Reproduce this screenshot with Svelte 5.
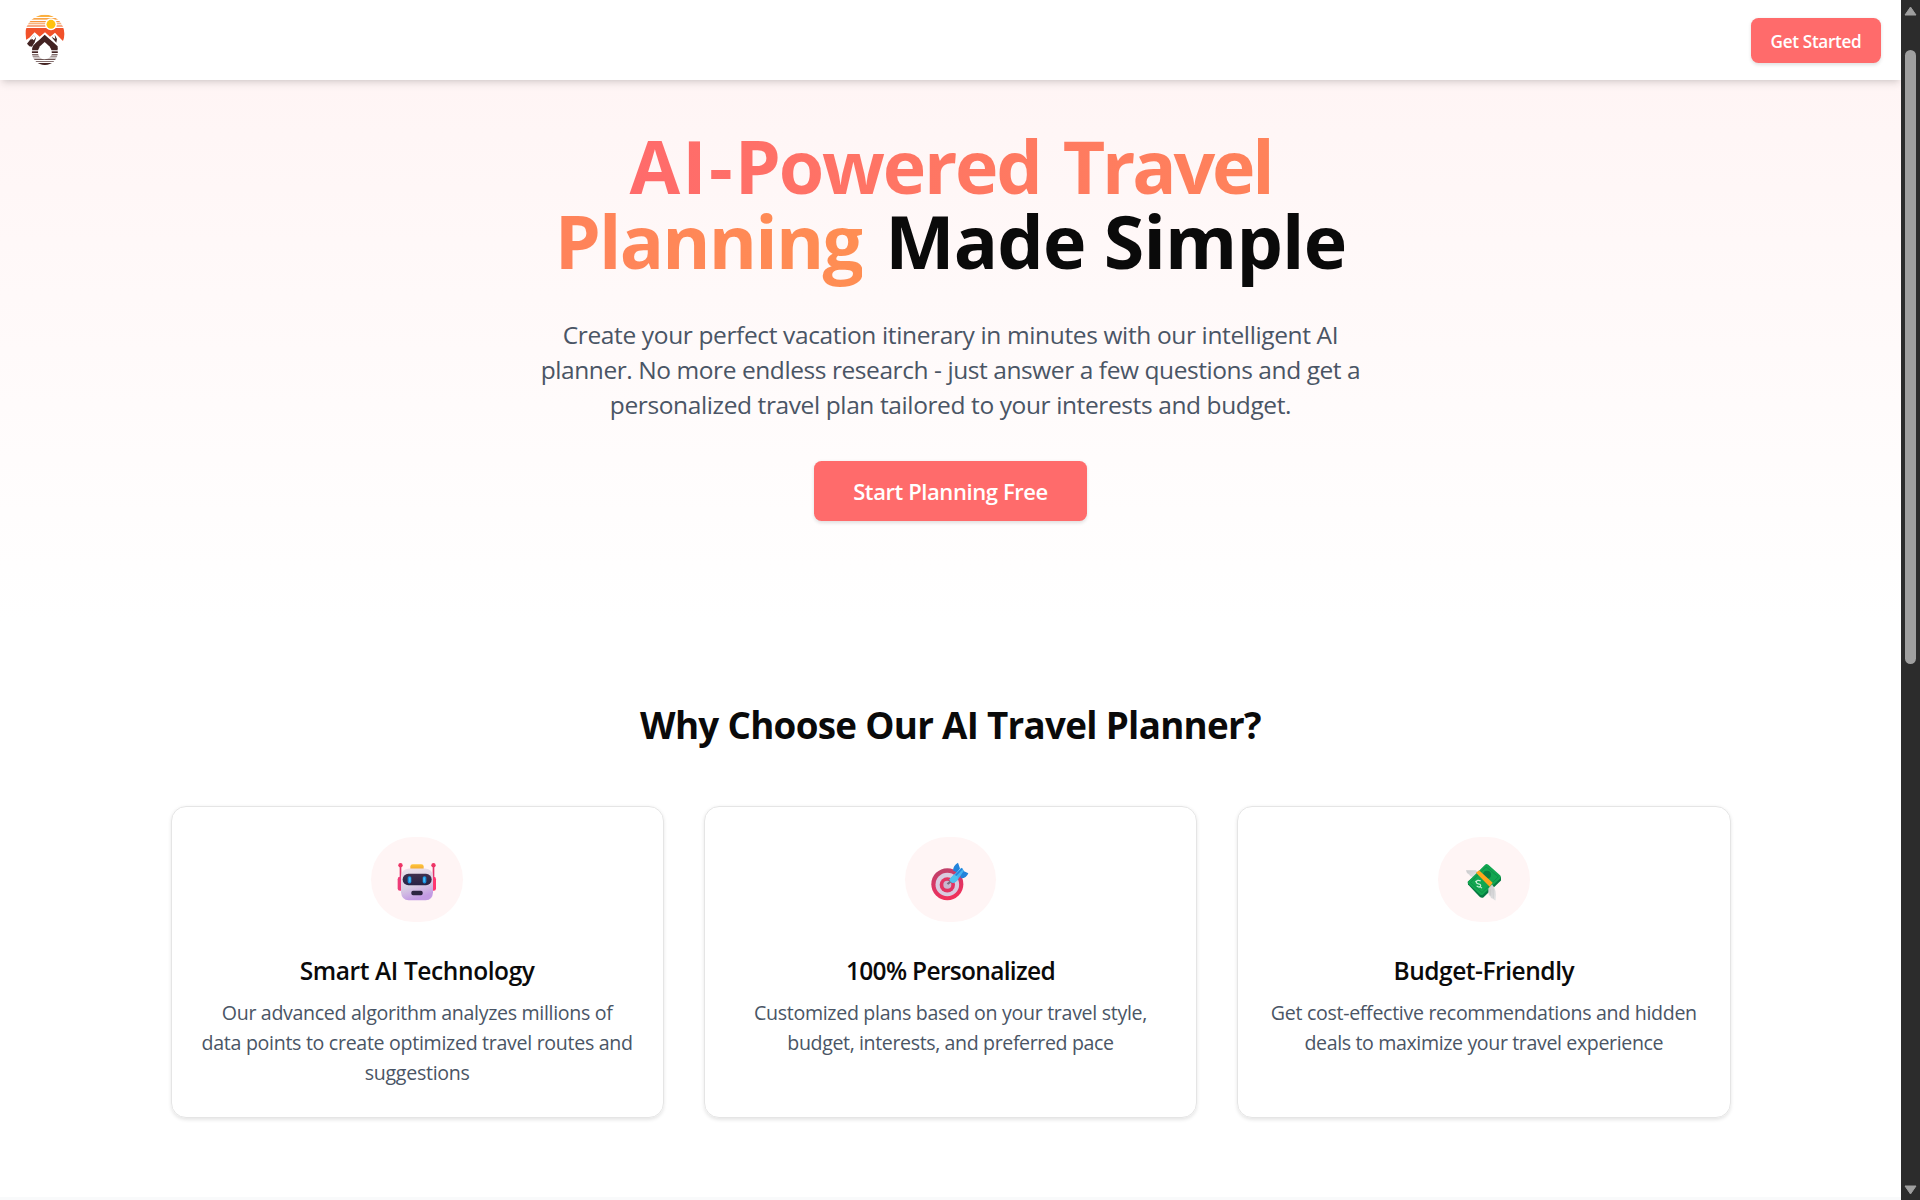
<script>
  const intro = [
    { text: 'Create your perfect vacation itinerary in minutes with our intelligent AI', tracking: -0.368 },
    { text: 'planner. No more endless research - just answer a few questions and get a', tracking: -0.428 },
    { text: 'personalized travel plan tailored to your interests and budget.', tracking: -0.39 }
  ];

  const features = [
    {
      icon: 'robot',
      badge: 92,
      title: 'Smart AI Technology',
      tracking: -0.4,
      lines: [
        { text: 'Our advanced algorithm analyzes millions of', tracking: -0.32 },
        { text: 'data points to create optimized travel routes and', tracking: -0.305 },
        { text: 'suggestions', tracking: -0.271 }
      ]
    },
    {
      icon: 'target',
      badge: 91,
      title: '100% Personalized',
      tracking: -0.68,
      lines: [
        { text: 'Customized plans based on your travel style,', tracking: -0.315 },
        { text: 'budget, interests, and preferred pace', tracking: -0.385 }
      ]
    },
    {
      icon: 'money',
      badge: 92,
      title: 'Budget-Friendly',
      tracking: -0.461,
      lines: [
        { text: 'Get cost-effective recommendations and hidden', tracking: -0.31 },
        { text: 'deals to maximize your travel experience', tracking: -0.375 }
      ]
    }
  ];
</script>

<div class="window">
  <div class="page">
    <header>
      <svg class="logo" viewBox="75 42 120 156" aria-label="Logo">
        <defs>
          <clipPath id="sky"><ellipse cx="134.500" cy="102" rx="58.500" ry="58" /></clipPath>
          <clipPath id="lake"><circle cx="134.500" cy="156" r="39" /></clipPath>
        </defs>
        <g clip-path="url(#sky)">
          <rect x="75" y="44" width="120" height="7" fill="#fbb040" />
          <rect x="75" y="54" width="120" height="5" fill="#f9a447" />
          <rect x="75" y="63" width="120" height="4" fill="#f7953f" />
          <rect x="75" y="69" width="120" height="4" fill="#f8b27c" />
          <rect x="75" y="76" width="120" height="4" fill="#f3804a" />
          <path d="M75 84H195V122H188L174 108L165 98L157 105L150 110L135 97L119 110L104 97L88 113L78 120Z" fill="#f1512a" />
        </g>
        <path d="M81 131L101 106L108 114L104 127L96 140L88 139Z" fill="#432322" />
        <path d="M91 119L101 105L107 113L101 121L97 117Z" fill="#fff" />
        <path d="M155 112L165 106L171 117L169 128Z" fill="#432322" />
        <path d="M155 111L164 105L166 117L161 114Z" fill="#fff" />
        <g clip-path="url(#lake)" fill="#432322">
          <path d="M134 103L94 142V151H175V142Z" />
          <rect x="94" y="154" width="82" height="5" />
          <rect x="94" y="163" width="82" height="3" />
          <rect x="94" y="169" width="82" height="3" fill="#77605f" />
          <rect x="94" y="176" width="82" height="4" fill="#6b5352" />
          <rect x="94" y="183" width="82" height="3" fill="#86706f" />
          <rect x="94" y="189" width="82" height="6" />
        </g>
        <path d="M134 104L99 138L97 148L113 142L134 124L156 145L173 148V139Z" fill="#432322" />
        <path d="M134 126L120 139Q112 150 114 161Q118 177 134 178Q151 177 155 163Q157 150 148 139Z" fill="#fff" />
        <circle cx="153" cy="73" r="18" fill="#fff" />
        <circle cx="153" cy="73" r="13.500" fill="#ffc20e" />
      </svg>
      <button class="small">Get Started</button>
    </header>

    <section class="hero">
      <h1>
        <span class="accent"><span class="prefix">AI-</span><span class="powered">Powered</span> <span class="travel">Travel</span><br /><span class="second">Planning</span></span>
        <span class="plain">Made Simple</span>
      </h1>
      <p>
        {#each intro as line}
          <span class="line" style:letter-spacing="{line.tracking}px">{line.text}</span>
        {/each}
      </p>
      <button class="large">Start Planning Free</button>
    </section>

    <section class="features">
      <h2>Why Choose Our AI Travel Planner?</h2>
      <div class="grid">
        {#each features as item}
          <article>
            <div class="badge" style:width="{item.badge}px">
              {#if item.icon === 'robot'}
                <svg class="icon" viewBox="112 124 120 120">
                  <defs>
                    <linearGradient id="head" x1="0" y1="0" x2="0.300" y2="1">
                      <stop offset="0" stop-color="#efe3ec" /><stop offset=".6" stop-color="#d9cfe2" /><stop offset="1" stop-color="#c39ae3" />
                    </linearGradient>
                    <linearGradient id="visor" x1="0" y1="0" x2="0" y2="1">
                      <stop offset="0" stop-color="#40304d" /><stop offset="1" stop-color="#272345" />
                    </linearGradient>
                    <linearGradient id="cap" x1="0" y1="0" x2="0" y2="1">
                      <stop offset="0" stop-color="#ffc63b" /><stop offset="1" stop-color="#ee9f2d" />
                    </linearGradient>
                  </defs>
                  <rect x="120" y="137" width="5" height="40" fill="#e2336d" />
                  <rect x="219" y="137" width="5" height="40" fill="#e2336d" />
                  <circle cx="122.500" cy="135" r="6.500" fill="#ee3465" />
                  <circle cx="221.500" cy="135" r="6.500" fill="#ee3465" />
                  <rect x="114" y="170" width="16" height="42" rx="7" fill="#ee3b78" />
                  <rect x="214" y="170" width="15" height="42" rx="7" fill="#ff3770" />
                  <rect x="152" y="132" width="40" height="20" rx="7" fill="url(#cap)" />
                  <path d="M148 145H196Q219 147 220 169V216Q219 239 198 240H147Q126 239 124 216V169Q126 147 148 145Z" fill="url(#head)" />
                  <rect x="129" y="161" width="87" height="34" rx="17" fill="url(#visor)" />
                  <rect x="144" y="168" width="11" height="22" rx="5" fill="#198cdc" />
                  <rect x="189" y="168" width="11" height="22" rx="5" fill="#198cdc" />
                  <rect x="148" y="171" width="5" height="15" rx="2.500" fill="#42bdf5" />
                  <rect x="191" y="171" width="5" height="15" rx="2.500" fill="#42bdf5" />
                  <rect x="155" y="212" width="34" height="13" rx="5" fill="#2c2440" />
                </svg>
              {:else if item.icon === 'target'}
                <svg class="icon" viewBox="122 124 120 120">
                  <defs>
                    <linearGradient id="ring" x1="0" y1="0" x2="0.300" y2="1">
                      <stop offset="0" stop-color="#b8456c" /><stop offset=".6" stop-color="#dd3564" /><stop offset="1" stop-color="#f0315c" />
                    </linearGradient>
                  </defs>
                  <circle cx="174" cy="192" r="48" fill="url(#ring)" />
                  <circle cx="174" cy="193" r="35.500" fill="#d9cbe0" />
                  <circle cx="174" cy="194" r="23" fill="#e23563" />
                  <circle cx="174" cy="194" r="12" fill="#c9b8cf" />
                  <path d="M172 190L185 179L189 184L177 194Z" fill="#776e7e" />
                  <path d="M191 151Q192 136 206 128L212 145L203 157ZM212 160L221 152L237 159Q231 175 214 174Z" fill="#2383db" />
                  <path d="M180 178L194 163L216 143L224 151L206 178Q193 194 184 185Z" fill="#45b2f0" />
                  <path d="M180 178L194 163Q207 166 206 179Q193 194 184 185Z" fill="#50c3ef" />
                  <path d="M199 166L219 145" stroke="#2383db" stroke-width="5" />
                </svg>
              {:else}
                <svg class="icon" viewBox="132 124 120 120">
                  <defs>
                    <linearGradient id="wing" x1="0" y1="0" x2="1" y2="1">
                      <stop offset="0" stop-color="#c9c9cb" /><stop offset="1" stop-color="#e6e6e7" />
                    </linearGradient>
                  </defs>
                  <path d="M138 150H168L175 158L160 171Q149 169 147 163Q139 159 138 150Z" fill="url(#wing)" />
                  <path d="M143 185L201 137L243 171V181L190 232Q184 234 178 229L144 193Z" fill="#067a42" />
                  <path d="M196 133Q200 129 205 134L241 166Q245 171 240 176L190 222Q185 227 180 223L145 191Q142 187 145 183Z" fill="#12a650" />
                  <path d="M198 140L235 170L186 217L151 187Z" fill="none" stroke="#0b8745" stroke-width="2" />
                  <circle cx="201" cy="164" r="12" fill="#087d42" />
                  <path d="M168 158L177 150L218 188L209 200Z" fill="#ffa51d" />
                  <path d="M182 182Q171 178 169 185Q168 190 175 191Q185 193 181 199Q177 203 170 197M166 183L171 187M181 200L186 204" fill="none" stroke="#c9eed8" stroke-width="3.500" />
                  <path d="M205 205L216 193Q231 207 227 241Q222 241 219 236Q211 235 211 228Q205 226 205 217Z" fill="url(#wing)" />
                  <path d="M212 207V226M219 205L220 235" stroke="#c1c1c3" stroke-width="1.500" />
                </svg>
              {/if}
            </div>
            <h3 style:letter-spacing="{item.tracking}px">{item.title}</h3>
            <p>
              {#each item.lines as line}
                <span class="line" style:letter-spacing="{line.tracking}px">{line.text}</span>
              {/each}
            </p>
          </article>
        {/each}
      </div>
    </section>
    <div class="next"></div>
  </div>

  <aside class="scrollbar">
    <svg class="arrow" viewBox="0 0 13 10"><path d="M6.500 1L12 9H1Z" /></svg>
    <div class="thumb"></div>
    <svg class="arrow down" viewBox="0 0 13 10"><path d="M6.500 1L12 9H1Z" /></svg>
  </aside>
</div>

<style>
  :global(body) {
    margin: 0;
    overflow: hidden;
  }
  .window {
    display: flex;
    width: 1920px;
    height: 1200px;
    overflow: hidden;
    background: #fff;
    color: #0a0a0a;
    font-family: 'Segoe UI', 'Open Sans', sans-serif;
  }
  .page {
    display: flex;
    flex-direction: column;
    width: 1901px;
    overflow: hidden;
  }
  header {
    position: relative;
    display: flex;
    flex: none;
    align-items: center;
    justify-content: space-between;
    box-sizing: border-box;
    height: 80px;
    padding: 0 20px 0 25px;
    background: #fff;
    box-shadow: 0 5px 7.5px -1.25px rgb(0 0 0 / 0.1), 0 2.5px 5px -2.5px rgb(0 0 0 / 0.1);
  }
  .logo {
    width: 40px;
    height: 52px;
  }
  button {
    padding: 0;
    border: 0;
    border-radius: 7.5px;
    background: #ff6b6b;
    color: #fff;
    font-family: inherit;
    font-weight: 600;
    white-space: nowrap;
    box-shadow: 0 1.25px 3.75px rgb(0 0 0 / 0.12);
  }
  .small {
    width: 130px;
    height: 45px;
    margin-top: 1px;
    padding-top: 1px;
    font-size: 17.15px;
    font-weight: 650;
    letter-spacing: -0.32px;
  }
  .large {
    width: 273px;
    height: 60px;
    margin-top: 39px;
    font-size: 22px;
    letter-spacing: -0.41px;
  }
  .hero {
    display: flex;
    flex: none;
    flex-direction: column;
    align-items: center;
    box-sizing: border-box;
    height: 541px;
    padding-top: 48px;
    background: linear-gradient(#fff5f5, #fff);
    text-align: center;
  }
  h1,
  h2,
  h3,
  p {
    margin: 0;
    white-space: nowrap;
  }
  h1 {
    font-size: 73.5px;
    font-weight: 700;
    line-height: 75px;
  }
  .accent {
    background: linear-gradient(90deg, #ff6b6b, #ff8e53);
    background-clip: text;
    -webkit-background-clip: text;
    color: transparent;
  }
  .prefix {
    letter-spacing: 2.2px;
  }
  .powered {
    letter-spacing: -2.2px;
  }
  .travel {
    margin-left: 3px;
    letter-spacing: -3.2px;
  }
  .second {
    letter-spacing: -1.8px;
  }
  .plain {
    margin-left: 4px;
    letter-spacing: -0.825px;
  }
  .line {
    display: block;
  }
  .hero p {
    margin-top: 39px;
    color: #4a5565;
    font-size: 24.5px;
    line-height: 35px;
  }
  .features {
    flex: none;
    box-sizing: border-box;
    height: 576px;
    padding: 82px 170.5px 0;
    text-align: center;
  }
  h2 {
    font-size: 36.75px;
    font-weight: 700;
    line-height: 45px;
    letter-spacing: -0.693px;
  }
  .grid {
    display: grid;
    grid-template-columns: repeat(3, 1fr);
    gap: 40px;
    margin-top: 58px;
  }
  article {
    display: flex;
    flex-direction: column;
    align-items: center;
    box-sizing: border-box;
    height: 312px;
    padding-top: 30px;
    border: 1px solid #e5e5e5;
    border-radius: 15px;
    box-shadow: 0 1.25px 3.75px rgb(0 0 0 / 0.1);
  }
  .badge {
    display: flex;
    align-items: center;
    justify-content: center;
    height: 85px;
    border-radius: 45px;
    background: #fff5f5;
  }
  .icon {
    width: 40px;
    height: 40px;
    transform: translateY(1.5px);
  }
  h3 {
    margin-top: 31px;
    font-size: 24.5px;
    font-weight: 600;
    line-height: 35px;
  }
  article p {
    margin-top: 10px;
    color: #4a5565;
    font-size: 19.6px;
    line-height: 30px;
  }
  .next {
    height: 3px;
    background: #f9fafb;
  }
  .scrollbar {
    display: flex;
    flex-direction: column;
    align-items: center;
    box-sizing: border-box;
    width: 19px;
    padding: 6px 0 5px;
    background: #2c2c2c;
  }
  .arrow {
    width: 13px;
    height: 10px;
    fill: #9f9f9f;
    stroke: #9f9f9f;
    stroke-width: 1;
    stroke-linejoin: round;
  }
  .down {
    margin-top: auto;
    transform: rotate(180deg);
  }
  .thumb {
    width: 11px;
    height: 614px;
    margin-top: 34px;
    border-radius: 6px;
    background: #9f9f9f;
  }
</style>
